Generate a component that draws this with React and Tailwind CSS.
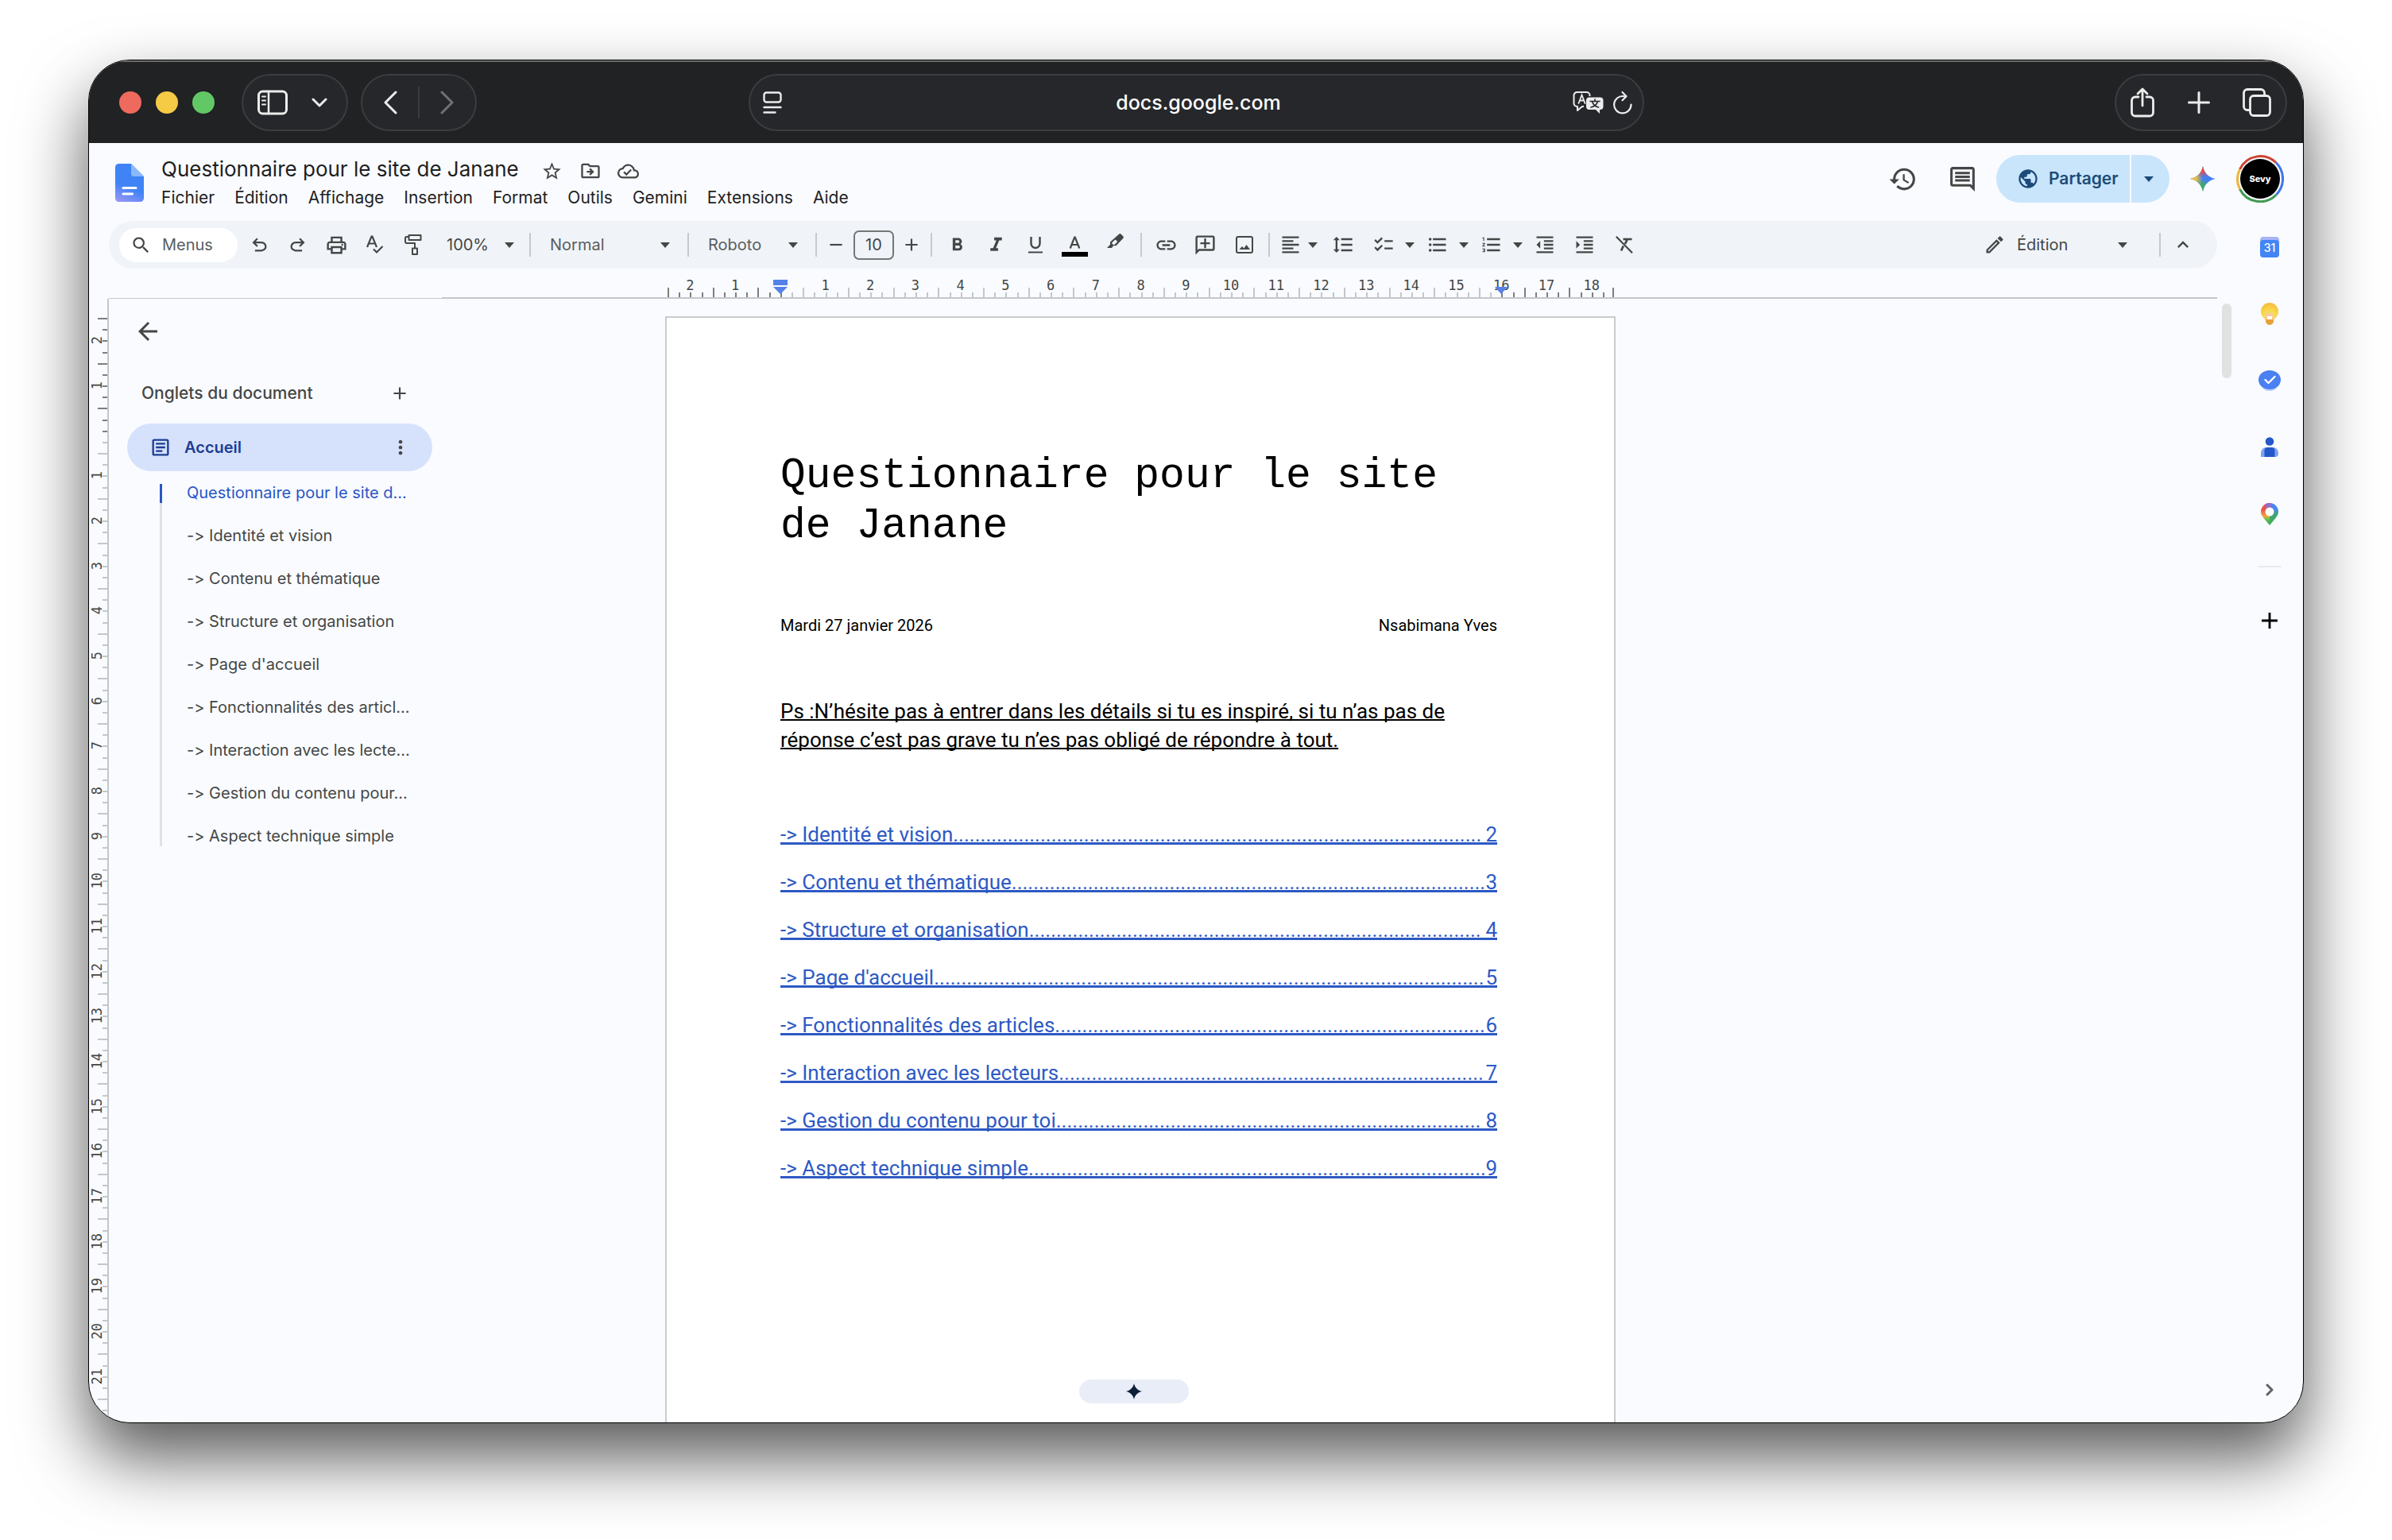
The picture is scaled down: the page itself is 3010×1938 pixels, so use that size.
import clsx from 'clsx';
import {
  MdAdd,
  MdArrowBack,
  MdChecklist,
  MdFormatAlignLeft,
  MdFormatBold,
  MdFormatIndentDecrease,
  MdFormatIndentIncrease,
  MdFormatItalic,
  MdFormatLineSpacing,
  MdFormatListBulleted,
  MdFormatListNumbered,
  MdHistory,
  MdInsertLink,
  MdKeyboardArrowUp,
  MdMoreVert,
  MdOutlineAddComment,
  MdOutlineArticle,
  MdOutlineCloudDone,
  MdOutlineComment,
  MdOutlineDriveFileMove,
  MdOutlineEdit,
  MdOutlinePrint,
  MdPublic,
  MdRemove,
  MdSearch,
  MdStarBorder,
} from 'react-icons/md';

const MENUS = ['Fichier', 'Édition', 'Affichage', 'Insertion', 'Format', 'Outils', 'Gemini', 'Extensions', 'Aide'];

const OUTLINE = [
  'Questionnaire pour le site d...',
  '-> Identité et vision',
  '-> Contenu et thématique',
  '-> Structure et organisation',
  "-> Page d'accueil",
  '-> Fonctionnalités des articl...',
  '-> Interaction avec les lecte...',
  '-> Gestion du contenu pour...',
  '-> Aspect technique simple',
];

// dots: length of the leader between the title and the page number
const TOC = [
  { title: '-> Identité et vision', page: 2, dots: 97 },
  { title: '-> Contenu et thématique', page: 3, dots: 87 },
  { title: '-> Structure et organisation', page: 4, dots: 83 },
  { title: "-> Page d'accueil", page: 5, dots: 101 },
  { title: '-> Fonctionnalités des articles', page: 6, dots: 79 },
  { title: '-> Interaction avec les lecteurs', page: 7, dots: 78 },
  { title: '-> Gestion du contenu pour toi', page: 8, dots: 78 },
  { title: '-> Aspect technique simple', page: 9, dots: 84 },
];

// One entry per centimetre, each cell is centred on its number
const H_RULER = Array.from({ length: 21 }, (_, i) => i - 2);
const V_RULER = Array.from({ length: 24 }, (_, i) => i - 2);

/* ---------- Browser chrome ---------- */

function ChromePill({ className, children }) {
  return (
    <div className={clsx('flex h-[72px] items-center rounded-full border-2 border-[#3a3d40] bg-[#26272b] text-[#ececec]', className)}>
      {children}
    </div>
  );
}

function SidebarIcon() {
  return (
    <svg width="38" height="32" viewBox="0 0 38 32" fill="none" stroke="currentColor" strokeWidth="3" strokeLinecap="round">
      <rect x="1.5" y="2" width="35" height="28" rx="5" />
      <path d="M14 2v28" strokeWidth="2.5" />
      <path d="M6 8.5h4M6 13.5h4M6 18.5h4" strokeWidth="2" />
    </svg>
  );
}

function Chevron({ d, width, height, className }) {
  return (
    <svg width={width} height={height} viewBox={`0 0 ${width} ${height}`} fill="none" stroke="currentColor" strokeWidth="3" strokeLinecap="round" strokeLinejoin="round" className={className}>
      <path d={d} />
    </svg>
  );
}

function ReaderIcon() {
  return (
    <svg width="24" height="28" viewBox="0 0 24 28" fill="none" stroke="currentColor" strokeWidth="2.4" strokeLinecap="round">
      <rect x="1.5" y="1.5" width="21" height="12" rx="3" />
      <path d="M1.5 20h21M1.5 26.5h14" />
    </svg>
  );
}

function TranslateIcon() {
  return (
    <svg width="40" height="30" viewBox="0 0 40 30" fill="none">
      <path d="M14 20H12l-6 5v-5H5.5a4 4 0 0 1-4-4V6a4 4 0 0 1 4-4h12a4 4 0 0 1 4 4v1" stroke="currentColor" strokeWidth="2" strokeLinejoin="round" />
      <path d="m7.5 16 4-10.5 4 10.5M9 12.5h5" stroke="currentColor" strokeWidth="1.8" strokeLinecap="round" />
      <path d="M21 8.5h13.5a4 4 0 0 1 4 4V20a4 4 0 0 1-4 4H34v5l-5-5h-8a4 4 0 0 1-4-4v-7.500a4 4 0 0 1 4-4Z" fill="currentColor" />
      <path d="M22 13.5h12M28 11v2.5M31.5 13.5c-1 3.5-4 6.5-8.5 7.500M24.500 13.500c1 3.500 4 6.500 8 7.500" stroke="#26272b" strokeWidth="1.6" strokeLinecap="round" />
    </svg>
  );
}

function ReloadIcon() {
  return (
    <svg width="26" height="30" viewBox="0 0 26 30" fill="none" stroke="currentColor" strokeWidth="2.2" strokeLinecap="round" strokeLinejoin="round">
      <path d="M23.500 17.500a10.700 10.700 0 1 1-9.500-10.400l2.500.2" />
      <path d="m12.500 2 5 5.200-5 5" />
    </svg>
  );
}

function ShareIcon() {
  return (
    <svg width="30" height="38" viewBox="0 0 30 38" fill="none" stroke="currentColor" strokeWidth="2.8" strokeLinecap="round" strokeLinejoin="round">
      <path d="M10 12H6a4.500 4.500 0 0 0-4.500 4.500v15A4.500 4.500 0 0 0 6 36h18a4.500 4.500 0 0 0 4.500-4.500v-15A4.500 4.500 0 0 0 24 12h-4" />
      <path d="M15 23V2.500M9 8l6-6 6 6" />
    </svg>
  );
}

function TabsIcon() {
  return (
    <svg width="36" height="36" viewBox="0 0 36 36" fill="none" stroke="currentColor" strokeWidth="2.8" strokeLinecap="round">
      <rect x="9.5" y="9.5" width="25" height="25" rx="4.5" />
      <path d="M8 27.500H6A4.500 4.500 0 0 1 1.500 23V6A4.500 4.500 0 0 1 6 1.500h17A4.500 4.500 0 0 1 27.500 6v2" />
    </svg>
  );
}

function TitleBar() {
  return (
    <header className="grid h-[104px] shrink-0 grid-cols-[1fr_auto_1fr] items-center border-t-2 border-[#6b6d6a] bg-[#202223] pr-[20px] pl-[38px]">
      <div className="flex items-center">
        <div className="flex gap-[18px]">
          <button type="button" aria-label="Fermer" className="size-7 rounded-full bg-[#ee6a5f]" />
          <button type="button" aria-label="Réduire" className="size-7 rounded-full bg-[#f5cb45]" />
          <button type="button" aria-label="Agrandir" className="size-7 rounded-full bg-[#62c866]" />
        </div>
        <ChromePill className="ml-[34px] w-[134px] justify-between pr-[24px] pl-[18px]">
          <button type="button" aria-label="Barre latérale">
            <SidebarIcon />
          </button>
          <button type="button" aria-label="Groupes d'onglets">
            <Chevron width={20} height={12} d="M2 2l8 8 8-8" />
          </button>
        </ChromePill>
        <ChromePill className="ml-4 w-[146px] justify-between px-[26px]">
          <button type="button" aria-label="Page précédente">
            <Chevron width={18} height={30} d="M16 2 3 15l13 13" />
          </button>
          <span className="h-10 w-[2px] bg-[#3a3d40]" />
          <button type="button" aria-label="Page suivante" className="text-[#6f7173]">
            <Chevron width={18} height={30} d="M2 2l13 13L2 28" />
          </button>
        </ChromePill>
      </div>
      <ChromePill className="mr-[18px] w-[1127px] pr-[12px] pl-[16px]">
        <button type="button" aria-label="Réglages de la page">
          <ReaderIcon />
        </button>
        <input
          aria-label="Adresse"
          defaultValue="docs.google.com"
          className="min-w-0 flex-1 bg-transparent pl-[54px] text-center text-[25px] leading-8 font-medium text-white outline-none"
        />
        <button type="button" aria-label="Traduire">
          <TranslateIcon />
        </button>
        <button type="button" aria-label="Actualiser" className="ml-[10px]">
          <ReloadIcon />
        </button>
      </ChromePill>
      <ChromePill className="w-[217px] justify-between justify-self-end px-[18px]">
        <button type="button" aria-label="Partager la page">
          <ShareIcon />
        </button>
        <button type="button" aria-label="Nouvel onglet">
          <Chevron width={28} height={28} d="M14 1.500v25M1.500 14h25" />
        </button>
        <button type="button" aria-label="Vue des onglets">
          <TabsIcon />
        </button>
      </ChromePill>
    </header>
  );
}

/* ---------- Docs header ---------- */

function DocsLogo() {
  return (
    <svg width="36" height="48" viewBox="0 0 36 48">
      <defs>
        <linearGradient id="docs-body" x1="0.6" y1="0" x2="0.3" y2="1">
          <stop offset="0.6" stopColor="#4083f7" />
          <stop offset="1" stopColor="#8f94f4" />
        </linearGradient>
      </defs>
      <path d="M4.500 0H20l16 16v27.500a4.500 4.500 0 0 1-4.500 4.500h-27A4.500 4.500 0 0 1 0 43.500v-39A4.500 4.500 0 0 1 4.500 0Z" fill="url(#docs-body)" />
      <path d="m20 0 16 16H23.500a3.500 3.500 0 0 1-3.500-3.500Z" fill="#8ab9fb" />
      <path d="M10 30.500h16M10 38h11.500" stroke="#fff" strokeWidth="3.2" strokeLinecap="round" />
    </svg>
  );
}

function Caret({ className }) {
  return (
    <svg width="12" height="7" viewBox="0 0 12 7" fill="currentColor" className={className}>
      <path d="M0 0h12L6 7z" />
    </svg>
  );
}

function GeminiSpark() {
  return (
    <svg width="32" height="32" viewBox="0 0 32 32">
      <defs>
        <radialGradient id="spark-red" cx="0.5" cy="0.05" r="0.4">
          <stop offset="0.4" stopColor="#e2504a" />
          <stop offset="1" stopColor="#e2504a" stopOpacity="0" />
        </radialGradient>
        <radialGradient id="spark-yellow" cx="0.05" cy="0.5" r="0.45">
          <stop offset="0.4" stopColor="#f0c03c" />
          <stop offset="1" stopColor="#f0c03c" stopOpacity="0" />
        </radialGradient>
        <radialGradient id="spark-green" cx="0.45" cy="0.95" r="0.45">
          <stop offset="0.4" stopColor="#3fae5b" />
          <stop offset="1" stopColor="#3fae5b" stopOpacity="0" />
        </radialGradient>
        <path id="spark" d="M16 0c1.500 8.500 7.500 14.500 16 16-8.500 1.500-14.500 7.500-16 16C14.500 23.500 8.500 17.500 0 16 8.500 14.500 14.500 8.500 16 0Z" />
      </defs>
      <use href="#spark" fill="#427ff0" />
      <use href="#spark" fill="url(#spark-green)" />
      <use href="#spark" fill="url(#spark-yellow)" />
      <use href="#spark" fill="url(#spark-red)" />
    </svg>
  );
}

function Avatar() {
  return (
    <button type="button" aria-label="Compte Google" className="relative flex size-[60px] items-center justify-center">
      <svg width="60" height="60" viewBox="0 0 60 60" fill="none" strokeWidth="3" className="absolute inset-0">
        <path d="M4.500 18A28.500 28.500 0 0 1 50.200 9.800" stroke="#cf4332" />
        <path d="M50.200 9.800A28.500 28.500 0 0 1 50.200 50.200" stroke="#3f77e8" />
        <path d="M50.200 50.200A28.500 28.500 0 0 1 4.500 43" stroke="#3f9b50" />
        <path d="M4.500 43A28.500 28.500 0 0 1 4.500 18" stroke="#efb63a" />
      </svg>
      <span className="flex size-[50px] items-center justify-center rounded-full bg-black text-[11px] font-extrabold text-white">Sevy</span>
    </button>
  );
}

function DocsHeader() {
  return (
    <div className="flex h-[98px] shrink-0 items-start pr-[24px] pl-[33px]">
      <a href="#accueil-docs" aria-label="Accueil Docs" className="mt-[26px]">
        <DocsLogo />
      </a>
      <div className="ml-[22px] flex flex-col gap-[2px] pt-[15px]">
        <div className="flex h-9 items-center text-[#444746]">
          <h1 className="text-[26px] leading-9 text-[#1f1f1f]">Questionnaire pour le site de Janane</h1>
          <div className="flex items-center pt-1 pl-[18px]">
            <button type="button" aria-label="Ajouter aux favoris" className="flex w-12 justify-center"><MdStarBorder size={27} /></button>
            <button type="button" aria-label="Déplacer" className="flex w-12 justify-center"><MdOutlineDriveFileMove size={28} /></button>
            <button type="button" aria-label="État du document" className="flex w-12 justify-center"><MdOutlineCloudDone size={27} /></button>
          </div>
        </div>
        <nav className="flex gap-[25px] text-[21px] leading-8 text-[#1f1f1f]">
          {MENUS.map((menu) => (
            <button key={menu} type="button">{menu}</button>
          ))}
        </nav>
      </div>
      <div className="mt-[15px] ml-auto flex h-[60px] items-center text-[#444746]">
        <button type="button" aria-label="Historique"><MdHistory size={37} /></button>
        <button type="button" aria-label="Commentaires" className="ml-[38px]"><MdOutlineComment size={37} /></button>
        <div className="ml-[24px] flex gap-[2px] text-[#1d4b78]">
          <button type="button" className="flex h-[60px] w-[168px] items-center gap-3 rounded-l-full bg-[#c9e5fb] pl-[26px] text-[21px] font-semibold">
            <MdPublic size={28} className="shrink-0" />
            Partager
          </button>
          <button type="button" aria-label="Options de partage" className="flex h-[60px] w-[48px] items-center justify-center rounded-r-full bg-[#c9e5fb] pr-1">
            <Caret />
          </button>
        </div>
        <button type="button" aria-label="Gemini" className="ml-[26px]"><GeminiSpark /></button>
        <div className="ml-[26px]">
          <Avatar />
        </div>
      </div>
    </div>
  );
}

/* ---------- Toolbar ---------- */

function Divider() {
  return (
    <span className="flex w-[14px] shrink-0 justify-center">
      <span className="h-[30px] w-[2px] bg-[#c7cacc]" />
    </span>
  );
}

function ToolButton({ label, className = 'w-12', children }) {
  return (
    <button type="button" aria-label={label} className={clsx('flex h-11 shrink-0 items-center justify-center', className)}>
      {children}
    </button>
  );
}

function SplitButton({ label, children }) {
  return (
    <button type="button" aria-label={label} className="flex h-11 w-[68px] shrink-0 items-center gap-[13px] pl-3">
      {children}
      <Caret />
    </button>
  );
}

function ToolSelect({ label, value, className, caretClass }) {
  return (
    <div className={clsx('relative flex h-11 shrink-0 items-center', className)}>
      <select aria-label={label} defaultValue={value} className="h-full w-full appearance-none bg-transparent pl-[18px] text-[20px] outline-none">
        <option>{value}</option>
      </select>
      <Caret className={clsx('pointer-events-none absolute top-[19px] text-[#444746]', caretClass)} />
    </div>
  );
}

function UndoIcon({ className }) {
  return (
    <svg width="27" height="27" viewBox="0 0 24 24" fill="currentColor" className={className}>
      <path d="M7 19v-2h7.100q1.575 0 2.738-1T18 13.500 16.838 11 14.100 10H7.800l2.600 2.600L9 14 4 9l5-5 1.400 1.400L7.800 8h6.300q2.425 0 4.163 1.575T20 13.500t-1.737 3.925T14.100 19z" />
    </svg>
  );
}

function SpellIcon() {
  return (
    <svg width="22" height="24" viewBox="0 0 22 24" fill="none" stroke="currentColor" strokeWidth="2.2">
      <path d="M1 15 6.500 1.500h1L13 15M3.200 10.500h7.600" />
      <path d="m9 17.500 4 4 7.500-7.500" />
    </svg>
  );
}

function PaintIcon() {
  return (
    <svg width="22" height="26" viewBox="0 0 22 26" fill="none" stroke="currentColor" strokeWidth="2" strokeLinejoin="round">
      <path d="M5.500 1h15v6h-15zM10 17.500h6V25h-6z" />
      <path d="M5.500 3H2.800A1.800 1.800 0 0 0 1 4.800v4.400A1.800 1.800 0 0 0 2.800 11H13v6.500" />
    </svg>
  );
}

function UnderlineIcon() {
  return (
    <svg width="18" height="22" viewBox="0 0 18 22" fill="none" stroke="currentColor" strokeWidth="2.4">
      <path d="M3.500 1v8.500a5.500 5.500 0 0 0 11 0V1" />
      <path d="M0 20.500h18" strokeWidth="2" />
    </svg>
  );
}

function TextColorIcon() {
  return (
    <svg width="33" height="32" viewBox="0 0 33 32" fill="none">
      <path d="m10.700 20.500 5.500-14h.6l5.500 14M12.500 16h8" stroke="currentColor" strokeWidth="2.2" />
      <path d="M0 25h33v6H0z" fill="#000" />
    </svg>
  );
}

function HighlightIcon() {
  return (
    <svg width="21" height="18" viewBox="0 0 21 18" fill="currentColor" className="mb-[10px]">
      <path
        fillRule="evenodd"
        d="M15 .8a2 2 0 0 1 2.800 0l2.400 2.400a2 2 0 0 1 0 2.800L11.500 15.200H8L6 18H0l4-4.300v-3.200ZM10.300 7.500 5.800 12l3 2.500 4.500-4.500Z"
      />
    </svg>
  );
}

function ImageIcon() {
  return (
    <svg width="22" height="22" viewBox="0 0 22 22" fill="none">
      <rect x="1" y="1" width="20" height="20" rx="2" stroke="currentColor" strokeWidth="2" />
      <path d="m4.500 17 3.500-4 2.300 2.500 3.200-4.500 4.500 6Z" fill="currentColor" />
    </svg>
  );
}

function ClearFormatIcon() {
  return (
    <svg width="22" height="22" viewBox="0 0 22 22" fill="none" stroke="currentColor">
      <path d="M.8.8 21 21.200" strokeWidth="2.2" />
      <path d="M9.500 4h11" strokeWidth="2.6" />
      <path d="M14.500 4.500 12 10M9.800 12.500 7 18.500" strokeWidth="2.8" />
    </svg>
  );
}

function Toolbar() {
  return (
    <div className="ml-[25px] flex h-[60px] shrink-0 items-center rounded-full bg-[#f0f4f9] pr-[21px] pl-[13px] text-[#444746]">
      <label className="flex h-[43px] w-[149px] shrink-0 items-center rounded-full bg-white pl-[14px]">
        <MdSearch size={27} className="shrink-0" />
        <input aria-label="Rechercher dans les menus" placeholder="Menus" className="ml-[13px] w-[84px] bg-transparent text-[20px] outline-none placeholder:text-[#5a5d60]" />
      </label>
      <div className="ml-[3px] flex">
        <ToolButton label="Annuler"><UndoIcon /></ToolButton>
        <ToolButton label="Rétablir"><UndoIcon className="-scale-x-100" /></ToolButton>
        <ToolButton label="Imprimer" className="w-[50px]"><MdOutlinePrint size={29} /></ToolButton>
        <ToolButton label="Orthographe"><SpellIcon /></ToolButton>
        <ToolButton label="Reproduire la mise en forme"><PaintIcon /></ToolButton>
      </div>
      <ToolSelect label="Zoom" value="100%" className="w-[116px]" caretClass="right-[13px]" />
      <Divider />
      <ToolSelect label="Style" value="Normal" className="w-[185px] text-[#5a5d60]" caretClass="right-4" />
      <Divider />
      <ToolSelect label="Police" value="Roboto" className="w-[147px] text-[#5a5d60]" caretClass="right-4" />
      <Divider />
      <ToolButton label="Réduire la taille" className="w-9"><MdRemove size={26} /></ToolButton>
      <input
        aria-label="Taille de police"
        defaultValue="10"
        className="mx-1 h-[37px] w-[51px] rounded-[7px] border-2 border-[#747775] bg-transparent text-center text-[20px] outline-none"
      />
      <ToolButton label="Augmenter la taille" className="w-9"><MdAdd size={26} /></ToolButton>
      <Divider />
      <ToolButton label="Gras" className="w-[50px]"><MdFormatBold size={27} /></ToolButton>
      <ToolButton label="Italique" className="w-[49px]"><MdFormatItalic size={29} /></ToolButton>
      <ToolButton label="Souligné" className="w-[49px]"><UnderlineIcon /></ToolButton>
      <ToolButton label="Couleur du texte" className="w-[51px]"><TextColorIcon /></ToolButton>
      <ToolButton label="Surlignage" className="w-[51px]"><HighlightIcon /></ToolButton>
      <Divider />
      <ToolButton label="Insérer un lien" className="w-[49px]"><MdInsertLink size={29} /></ToolButton>
      <ToolButton label="Ajouter un commentaire" className="w-[49px]"><MdOutlineAddComment size={29} className="-scale-x-100" /></ToolButton>
      <ToolButton label="Insérer une image" className="w-[49px]"><ImageIcon /></ToolButton>
      <Divider />
      <button type="button" aria-label="Alignement" className="flex h-11 w-[61px] shrink-0 items-center gap-2 pl-[6px]">
        <MdFormatAlignLeft size={28} />
        <Caret />
      </button>
      <ToolButton label="Interligne" className="w-[50px]"><MdFormatLineSpacing size={28} /></ToolButton>
      <SplitButton label="Checklist"><MdChecklist size={28} /></SplitButton>
      <SplitButton label="Liste à puces"><MdFormatListBulleted size={28} /></SplitButton>
      <SplitButton label="Liste numérotée"><MdFormatListNumbered size={28} /></SplitButton>
      <ToolButton label="Diminuer le retrait" className="w-[50px]"><MdFormatIndentDecrease size={28} /></ToolButton>
      <ToolButton label="Augmenter le retrait" className="w-[50px]"><MdFormatIndentIncrease size={28} /></ToolButton>
      <ToolButton label="Supprimer la mise en forme" className="w-[50px]"><ClearFormatIcon /></ToolButton>
      <div className="ml-auto flex items-center">
        <div className="relative flex h-11 w-[199px] items-center">
          <MdOutlineEdit size={28} className="pointer-events-none absolute left-2" />
          <select aria-label="Mode" defaultValue="Édition" className="h-full w-full appearance-none bg-transparent pl-[50px] text-[20px] outline-none">
            <option>Édition</option>
          </select>
          <Caret className="pointer-events-none absolute top-[19px] right-[10px]" />
        </div>
        <span className="w-6" />
        <Divider />
        <ToolButton label="Masquer les menus" className="w-11"><MdKeyboardArrowUp size={28} /></ToolButton>
      </div>
    </div>
  );
}

/* ---------- Rulers ---------- */

function HorizontalRuler() {
  return (
    <div className="relative ml-[284px] flex w-[1191px] shrink-0">
      {H_RULER.map((n) => (
        <div key={n} className="relative h-9 flex-1 pt-[9px] text-center font-['DejaVu_Sans_Mono'] text-[17px] leading-[24px] text-[#444746]">
          {n === 0 ? '' : Math.abs(n)}
          <div className="absolute inset-x-0 bottom-0 flex items-end">
            {[0, 1, 2, 3].map((q) => {
              const pos = n - 0.5 + q / 4;
              return (
                <span
                  key={q}
                  className={clsx(
                    'flex-1 border-l-2',
                    q === 0 ? 'h-3' : 'h-[6px]',
                    pos < 0.1 || pos > 15.9 ? 'border-[#7c7f7e]' : 'border-[#c4c7c9]',
                  )}
                />
              );
            })}
          </div>
          {n === 0 && (
            <svg width="18" height="18" viewBox="0 0 18 18" fill="#5582e8" className="absolute bottom-1 left-1/2 -translate-x-1/2">
              <path d="M0 0h18v7H0zM0 9h18l-9 9z" />
            </svg>
          )}
          {n === 16 && (
            <svg width="16" height="9" viewBox="0 0 16 9" fill="#5582e8" className="absolute bottom-1 left-1/2 -translate-x-1/2">
              <path d="M0 0h16L8 9z" />
            </svg>
          )}
        </div>
      ))}
      <span className="absolute right-0 bottom-0 h-3 w-[2px] bg-[#7c7f7e]" />
    </div>
  );
}

function VerticalRuler() {
  return (
    <div className="w-[25px] shrink-0 overflow-hidden border-r-2 border-[#c4c7c9] pt-6">
      <div className="flex h-[1360px] flex-col">
        {V_RULER.map((n) => (
          <div key={n} className="relative flex flex-1 items-center">
            <span className="w-5 rotate-180 text-center font-['DejaVu_Sans_Mono'] text-[17px] leading-5 text-[#444746] [writing-mode:vertical-rl]">
              {n === 0 ? '' : Math.abs(n)}
            </span>
            <div className="absolute inset-y-0 right-0 flex flex-col items-end">
              {[0, 1, 2, 3].map((q) => (
                <span
                  key={q}
                  className={clsx(
                    'flex-1 border-t-2',
                    q === 0 ? 'w-3' : 'w-[6px]',
                    n - 0.5 + q / 4 < 0.1 ? 'border-[#7c7f7e]' : 'border-[#c4c7c9]',
                  )}
                />
              ))}
            </div>
          </div>
        ))}
      </div>
      <div className="flex flex-col items-end gap-3">
        <span className="h-[2px] w-3 bg-[#c4c7c9]" />
        <span className="h-[2px] w-[6px] bg-[#c4c7c9]" />
      </div>
    </div>
  );
}

/* ---------- Outline panel ---------- */

function OutlinePanel() {
  return (
    <aside className="w-[419px] shrink-0 pl-[23px] text-[#444746]">
      <button type="button" aria-label="Fermer le plan" className="mt-[23px] ml-[8px] flex size-[36px] items-center justify-center">
        <MdArrowBack size={36} />
      </button>
      <div className="mt-[44px] flex w-[384px] items-center justify-between pr-7 pl-[18px]">
        <h2 className="text-[21px] leading-8 font-medium">Onglets du document</h2>
        <button type="button" aria-label="Ajouter un onglet"><MdAdd size={26} /></button>
      </div>
      <div className="mt-[22px] flex h-[60px] w-[384px] items-center rounded-full bg-[#d6e2fb] pr-[26px] pl-[28px] text-[#1c3d94]">
        <MdOutlineArticle size={28} />
        <a href="#accueil" className="ml-4 text-[20px] font-semibold">Accueil</a>
        <button type="button" aria-label="Options" className="ml-auto text-[#444746]"><MdMoreVert size={28} /></button>
      </div>
      <ul className="relative ml-[41px] w-[320px] [font-feature-settings:'calt'_0] before:absolute before:top-4 before:bottom-[14px] before:left-0 before:w-[3px] before:bg-[#dfe1e6]">
        {OUTLINE.map((item, i) => (
          <li key={item} className="relative flex h-[54px] items-center pl-[34px]">
            {i === 0 && <span className="absolute top-4 left-0 h-6 w-[3px] bg-[#2a56c6]" />}
            <a href={`#titre-${i}`} className={clsx('text-[20px] whitespace-nowrap', i === 0 && 'text-[#2a56c6]')}>{item}</a>
          </li>
        ))}
      </ul>
    </aside>
  );
}

/* ---------- Document ---------- */

function DocumentPage() {
  return (
    <main className="relative mt-[22px] ml-[281px] w-[1196px] shrink-0 border-2 border-b-0 border-[#c9cbcd] bg-white pt-[168px] pr-[147px] pl-[143px] font-[Roboto] text-black">
      <p className="font-['Liberation_Mono'] text-[53px] leading-[63px]">
        Questionnaire pour le site
        <br />
        de Janane
      </p>
      <div className="mt-[81px] flex justify-between text-[20px] leading-6">
        <span>Mardi 27 janvier 2026</span>
        <span>Nsabimana Yves</span>
      </div>
      <p className="mt-[78px] text-[26px] leading-9 underline decoration-2 underline-offset-1 [text-decoration-skip-ink:none]">
        Ps :N’hésite pas à entrer dans les détails si tu es inspiré, si tu n’as pas de
        <br />
        réponse c’est pas grave tu n’es pas obligé de répondre à tout.
      </p>
      <nav className="mt-[78px] flex flex-col gap-6">
        {TOC.map(({ title, page, dots }) => (
          <a
            key={page}
            href={`#page-${page}`}
            className="flex h-9 justify-between border-b-[3px] border-[#2d59c4] text-[26px] leading-[46px] whitespace-nowrap text-[#2d59c4]"
          >
            <span className="min-w-0">{title + '.'.repeat(dots)}</span>
            <span>{page}</span>
          </a>
        ))}
      </nav>
    </main>
  );
}

/* ---------- Side rail ---------- */

function CalendarIcon() {
  return (
    <svg width="24" height="26" viewBox="0 0 24 26">
      <rect width="24" height="12" rx="4" fill="#a9b3f7" />
      <rect y="4" width="24" height="22" rx="4" fill="#4285f4" />
      <text x="12" y="19" textAnchor="middle" fontFamily="Inter" fontSize="14" fontWeight="500" fill="#fff">31</text>
    </svg>
  );
}

function KeepIcon() {
  return (
    <svg width="22" height="28" viewBox="0 0 22 28">
      <defs>
        <radialGradient id="bulb" cx="0.5" cy="0.85" r="0.8">
          <stop offset="0.1" stopColor="#f7c6c0" />
          <stop offset="0.45" stopColor="#f9dc4a" />
          <stop offset="1" stopColor="#f5bf3f" />
        </radialGradient>
      </defs>
      <path d="M11 0a11 11 0 0 1 11 11c0 5-3 7.500-5 10H5c-2-2.500-5-5-5-10A11 11 0 0 1 11 0Z" fill="url(#bulb)" />
      <path d="M8 17h6v4H8z" fill="#fff" />
      <path d="M6 21h10v2a5 5 0 0 1-10 0z" fill="#e8a03a" />
    </svg>
  );
}

function TasksIcon() {
  return (
    <svg width="28" height="26" viewBox="0 0 28 26" fill="none">
      <ellipse cx="14" cy="14.5" rx="12" ry="11.5" fill="#b9d3fb" />
      <ellipse cx="14" cy="12" rx="14" ry="12" fill="#4a80f2" />
      <path d="m8.500 12 4 4L20.500 8" stroke="#fff" strokeWidth="2.4" strokeLinecap="round" strokeLinejoin="round" />
    </svg>
  );
}

function ContactsIcon() {
  return (
    <svg width="22" height="26" viewBox="0 0 22 26">
      <circle cx="11" cy="5.5" r="5.3" fill="#2458c8" />
      <path d="M0 25v-4.500C0 16 3 13 7 13h8c4 0 7 3 7 7.500C22 23.500 20.500 25 18 25Z" fill="#7fa3f2" />
      <path d="M4.500 25v-8c0-2.500 1.500-4 4-4h5c2.500 0 4 1.500 4 4v8Z" fill="#2458c8" />
    </svg>
  );
}

function MapsIcon() {
  return (
    <svg width="22" height="28" viewBox="0 0 22 28">
      <defs>
        <clipPath id="pin">
          <path d="M11 0a11 11 0 0 1 11 11c0 3-1.500 5.500-3.500 8L11 28l-7.500-9C1.500 16.500 0 14 0 11A11 11 0 0 1 11 0Z" />
        </clipPath>
        <linearGradient id="pin-left" x1="0" y1="0" x2="0" y2="1">
          <stop offset="0.3" stopColor="#e8554a" />
          <stop offset="0.6" stopColor="#f3a83e" />
          <stop offset="0.7" stopColor="#7cc14c" />
          <stop offset="0.9" stopColor="#3fae5b" />
        </linearGradient>
        <linearGradient id="pin-right" x1="0" y1="0" x2="0" y2="1">
          <stop offset="0.25" stopColor="#4a86ee" />
          <stop offset="0.55" stopColor="#3fa56f" />
          <stop offset="0.9" stopColor="#3fae5b" />
        </linearGradient>
      </defs>
      <g clipPath="url(#pin)">
        <path d="M0 0h11v28H0z" fill="url(#pin-left)" />
        <path d="M11 0h11v28H11z" fill="url(#pin-right)" />
        <path d="M5 0h8v8H8z" fill="#8f6fd0" />
      </g>
      <circle cx="11" cy="11" r="5.5" fill="#fff" />
    </svg>
  );
}

function SideRail() {
  const apps = [
    { name: 'Agenda', Icon: CalendarIcon },
    { name: 'Keep', Icon: KeepIcon },
    { name: 'Tasks', Icon: TasksIcon },
    { name: 'Contacts', Icon: ContactsIcon },
    { name: 'Maps', Icon: MapsIcon },
  ];
  return (
    <div className="flex w-[108px] shrink-0">
      <div className="ml-[6px] pt-[104px]">
        <div className="h-[94px] w-3 rounded-full bg-[#dfe2e0]" />
      </div>
      <div className="ml-auto flex w-[84px] flex-col items-center pt-[11px]">
        <div className="flex flex-col gap-10">
          {apps.map(({ name, Icon }) => (
            <button key={name} type="button" aria-label={name} className="flex size-11 items-center justify-center">
              <Icon />
            </button>
          ))}
        </div>
        <span className="mt-[43px] h-[2px] w-[30px] bg-[#e8eaee]" />
        <button type="button" aria-label="Installer des modules" className="mt-[50px] text-black"><MdAdd size={34} /></button>
        <button type="button" aria-label="Masquer le panneau" className="mt-auto mb-[33px] text-[#5f6368]">
          <Chevron width={10} height={16} d="M2 2l6 6-6 6" />
        </button>
      </div>
    </div>
  );
}

export default function App() {
  return (
    <div className="flex h-screen flex-col bg-white pt-[75px] pr-[111px] pb-[147px] pl-[111px] font-[Inter]">
      <div className="flex min-h-0 flex-1 flex-col overflow-hidden rounded-[52px] border border-black bg-[#f9fbff] shadow-[0_43px_86px_rgba(0,0,0,0.66)]">
        <TitleBar />
        <DocsHeader />
        <div className="flex min-h-0 flex-1">
          <div className="flex min-w-0 flex-1 flex-col">
            <Toolbar />
            <div className="ml-[25px] flex h-[38px] shrink-0">
              <div className="w-[419px] shrink-0 border-b border-[#c4c7c9]" />
              <div className="flex flex-1 border-b-2 border-[#c4c7c9]">
                <HorizontalRuler />
              </div>
            </div>
            <div className="relative flex min-h-0 flex-1">
              <VerticalRuler />
              <OutlinePanel />
              <DocumentPage />
              <button
                type="button"
                aria-label="Aide à la rédaction"
                className="absolute bottom-[24px] left-[1246px] flex h-[30px] w-[138px] items-center justify-center rounded-full bg-[#e9edf7]"
              >
                <svg width="20" height="20" viewBox="0 0 32 32" fill="#0b1e38">
                  <path d="M16 0c2 8.500 7.500 14 16 16-8.500 2-14 7.500-16 16C14 23.500 8.500 18 0 16 8.500 14 14 8.500 16 0Z" />
                </svg>
              </button>
            </div>
          </div>
          <SideRail />
        </div>
      </div>
    </div>
  );
}
